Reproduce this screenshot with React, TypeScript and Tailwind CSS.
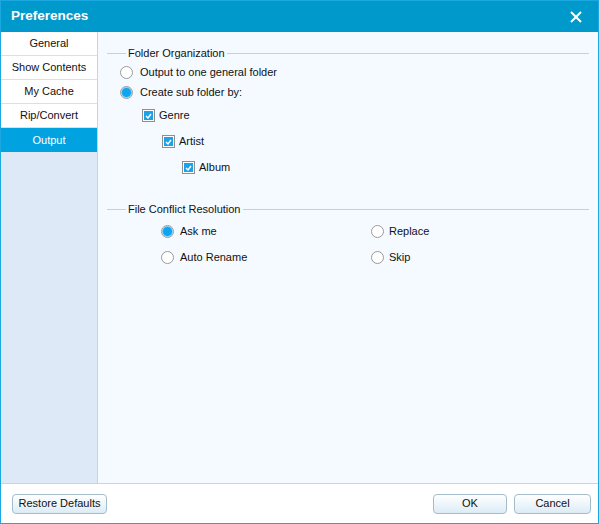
import { useState } from "react";

const tabs = ["General", "Show Contents", "My Cache", "Rip/Convert", "Output"];

function Radio({ checked }: { checked?: boolean }) {
  return (
    <span className="w-[13px] h-[13px] rounded-full border border-[#9a9a9a] bg-white flex items-center justify-center shrink-0">
      {checked && <span className="w-[11px] h-[11px] rounded-full bg-[#0ea5f0] border border-[#7fcff5]" />}
    </span>
  );
}

function Check() {
  return (
    <span className="w-[13px] h-[13px] border border-[#8f8f8f] bg-white flex items-center justify-center shrink-0">
      <span className="w-[9px] h-[9px] bg-[#1aa3e8] flex items-center justify-center">
        <svg width="7" height="6" viewBox="0 0 7 6">
          <path d="M1 3 L3 5 L6 1" stroke="white" strokeWidth="1.4" fill="none" />
        </svg>
      </span>
    </span>
  );
}

function GroupTitle({ label }: { label: string }) {
  return (
    <div className="flex items-center h-[14px]">
      <div className="w-[19px] h-px bg-[#a9dbe8]" />
      <span className="px-[2px]">{label}</span>
      <div className="flex-1 h-px bg-[#a9dbe8]" />
    </div>
  );
}

const btn =
  "h-[20px] rounded-[4px] border border-[#a6bccb] bg-gradient-to-b from-[#ffffff] to-[#dcecf7] whitespace-nowrap leading-none";

export default function App() {
  const [tab, setTab] = useState(4);

  return (
    <div
      className="w-[599px] h-[524px] flex flex-col border border-[#1ba8e0] text-[11px] text-[#111]"
      style={{ fontFamily: "'Liberation Sans', Arial, sans-serif" }}
    >
      {/* title bar */}
      <div className="h-[31px] bg-[#0099cc] flex items-center justify-between pl-[10px] pr-[16px] shrink-0">
        <span className="text-white font-bold text-[13.5px]">Preferences</span>
        <svg width="12" height="12" viewBox="0 0 12 12">
          <path d="M1 1 L11 11 M11 1 L1 11" stroke="white" strokeWidth="2" />
        </svg>
      </div>

      <div className="flex flex-1 min-h-0">
        {/* sidebar */}
        <div className="w-[97px] bg-[#dde9f6] border-r border-[#c3d5e5] flex flex-col shrink-0">
          {tabs.map((t, i) => (
            <div
              key={t}
              onClick={() => setTab(i)}
              className={
                i === tab
                  ? "h-[24px] flex items-center justify-center bg-[#00a3e0] text-white"
                  : "h-[24px] flex items-center justify-center bg-white border-b border-[#c8e6f2]"
              }
            >
              {t}
            </div>
          ))}
        </div>

        {/* content */}
        <div className="flex-1 bg-[#f4faff] pl-[9px] pr-[9px] pt-[14px]">
          <GroupTitle label="Folder Organization" />
          <div className="flex flex-col pl-[13px] pt-[6px]">
            <label className="flex items-center gap-[7px] h-[13px]">
              <Radio />
              <span>Output to one general folder</span>
            </label>
            <label className="flex items-center gap-[7px] h-[13px] mt-[7px]">
              <Radio checked />
              <span>Create sub folder by:</span>
            </label>
            <label className="flex items-center gap-[4px] h-[13px] mt-[10px] ml-[22px]">
              <Check />
              <span>Genre</span>
            </label>
            <label className="flex items-center gap-[4px] h-[13px] mt-[13px] ml-[42px]">
              <Check />
              <span>Artist</span>
            </label>
            <label className="flex items-center gap-[4px] h-[13px] mt-[13px] ml-[62px]">
              <Check />
              <span>Album</span>
            </label>
          </div>

          <div className="mt-[28px]">
            <GroupTitle label="File Conflict Resolution" />
          </div>
          <div className="grid grid-cols-[210px_1fr] gap-y-[13px] pl-[54px] pt-[9px]">
            <label className="flex items-center gap-[6px] h-[13px]">
              <Radio checked />
              <span>Ask me</span>
            </label>
            <label className="flex items-center gap-[5px] h-[13px]">
              <Radio />
              <span>Replace</span>
            </label>
            <label className="flex items-center gap-[6px] h-[13px]">
              <Radio />
              <span>Auto Rename</span>
            </label>
            <label className="flex items-center gap-[5px] h-[13px]">
              <Radio />
              <span>Skip</span>
            </label>
          </div>
        </div>
      </div>

      {/* bottom bar */}
      <div className="h-[40px] bg-white border-t border-[#b5dcea] flex items-center justify-between pl-[11px] pr-[7px] shrink-0">
        <button className={btn + " w-[95px]"}>Restore Defaults</button>
        <div className="flex gap-[7px]">
          <button className={btn + " w-[74px]"}>OK</button>
          <button className={btn + " w-[77px]"}>Cancel</button>
        </div>
      </div>
    </div>
  );
}
